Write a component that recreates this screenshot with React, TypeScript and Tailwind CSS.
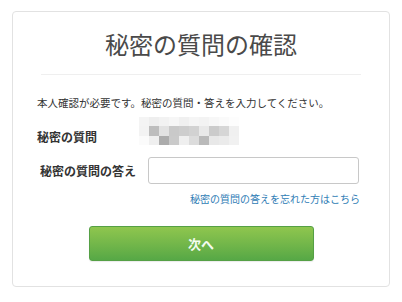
const jp = { fontFamily: '"Noto Sans CJK JP", "Noto Sans", sans-serif' };

// pixelated (mosaic) stand-in for the hidden question text
const mosaic: string[][] = [
  ["#f4f4f4", "#eeeeee", "#f2f2f2", "#f6f6f6", "#f0f0f0", "#f5f5f5", "#f3f3f3", "#f7f7f7", "#fafafa", "#fdfdfd"],
  ["#f3f3f3", "#bdbdbd", "#e2e2e2", "#c9c9c9", "#cdcdcd", "#d2d2d2", "#e9e9e9", "#cbcbcb", "#d6d6d6", "#f0f0f0"],
  ["#fbfbfb", "#efefef", "#acacac", "#cacaca", "#efefef", "#dcdcdc", "#bababa", "#e8e8e8", "#ebebeb", "#f1f1f1"],
];

export default function App() {
  return (
    <div className="h-[302px] w-[402px] bg-white px-[12px] pt-[11px] text-[#333]" style={jp}>
      <div className="h-[276px] rounded-[4px] border border-[#e2e2e2]">
        <h1 className="flex h-[62px] items-center justify-center pt-[2px] text-[24px] font-normal text-[#4a4a4a]">
          秘密の質問の確認
        </h1>
        <div className="mx-[28px] h-px bg-[#efefef]" />

        <div className="pl-[24px] pr-[29px]">
          <p className="mt-[21px] text-[10.5px] leading-[14px] text-[#333]">
            本人確認が必要です。秘密の質問・答えを入力してください。
          </p>

          <div className="mt-[7px] flex h-[28px]">
            <div className="w-[102px] pt-[13px] text-[12px] font-bold leading-[14px] text-[#333]">秘密の質問</div>
            <div className="flex flex-col">
              {mosaic.map((row, i) => (
                <div key={i} className={`flex ${i === 1 ? "h-[10px]" : "h-[9px]"}`}>
                  {row.map((c, j) => (
                    <div key={j} className="w-[10px]" style={{ backgroundColor: c }} />
                  ))}
                </div>
              ))}
            </div>
          </div>

          <div className="mt-[12px] flex items-center">
            <label className="w-[111px] pl-[3px] text-[12px] font-bold leading-[14px] text-[#333]">秘密の質問の答え</label>
            <input
              type="text"
              className="h-[27px] w-[211px] rounded-[3px] border border-[#c8c8c8] bg-white px-2 text-[12px] outline-none"
            />
          </div>

          <p className="mt-[8px] text-right text-[10px] leading-[14px]">
            <a href="#" className="text-[#2f7db5]">
              秘密の質問の答えを忘れた方はこちら
            </a>
          </p>
        </div>

        <div className="mt-[20px] flex justify-center">
          <button
            type="button"
            className="flex h-[35px] w-[225px] items-center justify-center rounded-[3px] border border-[#55a045] bg-gradient-to-b from-[#8fc64e] to-[#56a846] text-[13px] font-bold text-[#f4fbf0] shadow-[0_1px_1px_rgba(0,0,0,0.08)]"
          >
            次へ
          </button>
        </div>
      </div>
    </div>
  );
}
